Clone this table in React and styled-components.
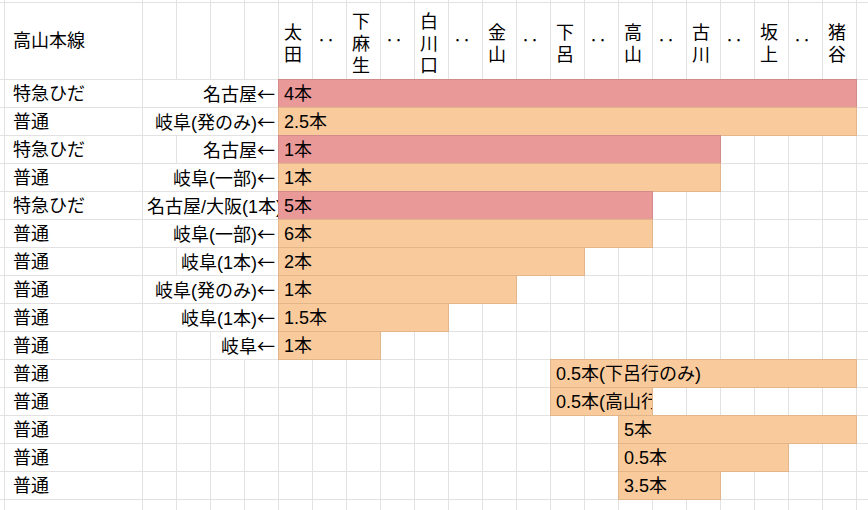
import React from 'react'
import styled, { createGlobalStyle } from 'styled-components'

const GlobalStyle = createGlobalStyle`
    html, body {
        margin: 0;
        padding: 0;
        background: #ffffff;
        overflow: hidden;
    }
    body {
        font-family: "Liberation Sans", "Noto Sans CJK JP", sans-serif;
        color: #000000;
    }
`

const STATION_COLS = 17
const LABEL_COLS = 4

const fills = {
    red: { bg: '#ea9999', line: '#d38a8a' },
    orange: { bg: '#f9cb9c', line: '#e2b68b' },
}

const Sheet = styled.div`
    display: grid;
    grid-template-columns: 3px 140px repeat(${LABEL_COLS + STATION_COLS}, 34px) 34px;
    grid-template-rows: 3px 77px repeat(15, 28px) 28px;
    width: 868px;
    height: 510px;
    overflow: hidden;
    font-size: 18px;
`

const Cell = styled.div`
    box-sizing: border-box;
    grid-column: span ${p => p.$span || 1};
    border-right: 1px solid #e2e2e2;
    border-bottom: 1px solid #e2e2e2;
    display: flex;
    align-items: center;
    justify-content: ${p => (p.$right ? 'flex-end' : 'flex-start')};
    padding: ${p => (p.$right ? '0 3px 0 0' : '0 0 0 4px')};
    white-space: nowrap;
    overflow: hidden;
    line-height: 1;
`

const NameCell = styled(Cell)`
    padding-left: 10px;
`

const Bar = styled(Cell)`
    background: ${p => fills[p.$fill].bg};
    border: 1px solid ${p => fills[p.$fill].line};
    margin: -1px 0 0 -1px;
    padding-left: 5px;
`

const StationCell = styled(Cell)`
    flex-direction: column;
    align-items: flex-start;
    justify-content: center;
    padding: 6px 0 0 5px;
`

const StackChar = styled.span`
    display: block;
    height: 22px;
    line-height: 22px;
`

const Arrow = styled.span`
    font-family: "Noto Sans CJK JP", sans-serif;
`

const stations = ['太田', '下麻生', '白川口', '金山', '下呂', '高山', '古川', '坂上', '猪谷']

const rows = [
    { name: '特急ひだ', label: '名古屋←', span: 4, start: 0, len: 17, fill: 'red', text: '4本' },
    { name: '普通', label: '岐阜(発のみ)←', span: 4, start: 0, len: 17, fill: 'orange', text: '2.5本' },
    { name: '特急ひだ', label: '名古屋←', span: 3, start: 0, len: 13, fill: 'red', text: '1本' },
    { name: '普通', label: '岐阜(一部)←', span: 4, start: 0, len: 13, fill: 'orange', text: '1本' },
    { name: '特急ひだ', label: '名古屋/大阪(1本)←', span: 4, clip: true, start: 0, len: 11, fill: 'red', text: '5本' },
    { name: '普通', label: '岐阜(一部)←', span: 4, start: 0, len: 11, fill: 'orange', text: '6本' },
    { name: '普通', label: '岐阜(1本)←', span: 3, start: 0, len: 9, fill: 'orange', text: '2本' },
    { name: '普通', label: '岐阜(発のみ)←', span: 4, start: 0, len: 7, fill: 'orange', text: '1本' },
    { name: '普通', label: '岐阜(1本)←', span: 4, start: 0, len: 5, fill: 'orange', text: '1.5本' },
    { name: '普通', label: '岐阜←', span: 2, start: 0, len: 3, fill: 'orange', text: '1本' },
    { name: '普通', start: 8, len: 9, fill: 'orange', text: '0.5本(下呂行のみ)' },
    { name: '普通', start: 8, len: 3, fill: 'orange', text: '0.5本(高山行のみ)' },
    { name: '普通', start: 10, len: 7, fill: 'orange', text: '5本' },
    { name: '普通', start: 10, len: 5, fill: 'orange', text: '0.5本' },
    { name: '普通', start: 10, len: 3, fill: 'orange', text: '3.5本' },
]

const blanks = (n, key) => Array.from({ length: n }, (_, i) => <Cell key={key + i} />)

const EmptyRow = ({ id }) => (
    <>
        {blanks(2 + LABEL_COLS + STATION_COLS + 1, id)}
    </>
)

const HeaderRow = () => (
    <>
        <Cell />
        <NameCell>高山本線</NameCell>
        {blanks(LABEL_COLS, 'hl')}
        {stations.map((st, i) => (
            <React.Fragment key={st}>
                <StationCell>
                    {st.split('').map((ch, j) => <StackChar key={j}>{ch}</StackChar>)}
                </StationCell>
                {i < stations.length - 1 && <Cell>‥</Cell>}
            </React.Fragment>
        ))}
        <Cell />
    </>
)

// 矢印だけCJKの全角グリフで描く
const Label = ({ text }) => {
    const body = text.replace(/←$/, '')
    return (
        <span>
            {body}
            {body !== text && <Arrow>←</Arrow>}
        </span>
    )
}

const DataRow = ({ row, index }) => {
    const after = STATION_COLS - row.start - row.len
    return (
        <>
            <Cell />
            <NameCell>{row.name}</NameCell>
            {row.label ? (
                <>
                    {blanks(LABEL_COLS - row.span, 'lb' + index)}
                    <Cell $span={row.span} $right={!row.clip}><Label text={row.label} /></Cell>
                </>
            ) : blanks(LABEL_COLS, 'lb' + index)}
            {blanks(row.start, 'pre' + index)}
            <Bar $span={row.len} $fill={row.fill}>{row.text}</Bar>
            {blanks(after, 'post' + index)}
            <Cell />
        </>
    )
}

export default function App() {
    return (
        <>
            <GlobalStyle />
            <Sheet>
                <EmptyRow id="top" />
                <HeaderRow />
                {rows.map((row, i) => <DataRow key={i} row={row} index={i} />)}
                <EmptyRow id="bottom" />
            </Sheet>
        </>
    )
}
